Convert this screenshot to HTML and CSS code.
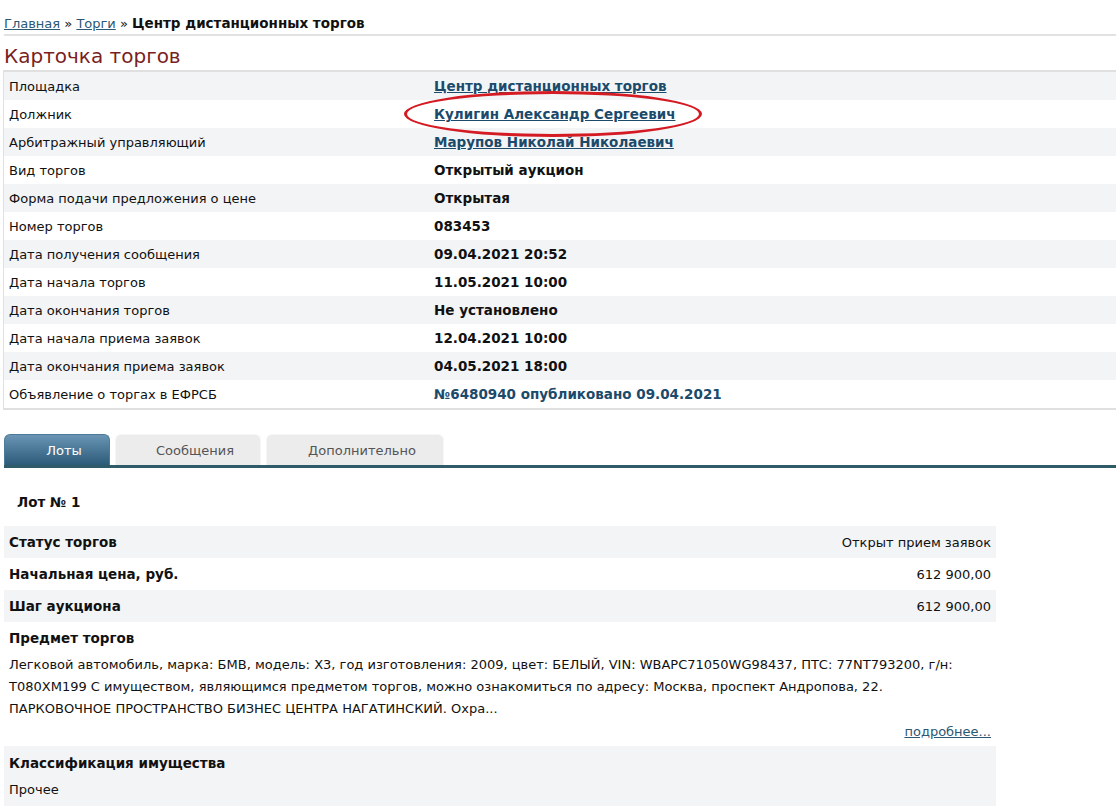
FILE: index.html
```html
<!DOCTYPE html>
<html lang="ru">
<head>
<meta charset="utf-8">
<title>Карточка торгов</title>
<link rel="stylesheet" href="styles.css">
</head>
<body>
<div class="page">
  <div class="crumbs">
    <a href="#">Главная</a> » <a href="#">Торги</a> » <b>Центр дистанционных торгов</b>
  </div>
  <h1 class="title">Карточка торгов</h1>

  <div class="info">
    <div class="row"><div class="k">Площадка</div><div class="v"><a href="#">Центр дистанционных торгов</a></div></div>
    <div class="row"><div class="k">Должник</div><div class="v"><span class="circled"><a href="#">Кулигин Александр Сергеевич</a><span class="ring"></span></span></div></div>
    <div class="row"><div class="k">Арбитражный управляющий</div><div class="v"><a href="#">Марупов Николай Николаевич</a></div></div>
    <div class="row"><div class="k">Вид торгов</div><div class="v">Открытый аукцион</div></div>
    <div class="row"><div class="k">Форма подачи предложения о цене</div><div class="v">Открытая</div></div>
    <div class="row"><div class="k">Номер торгов</div><div class="v">083453</div></div>
    <div class="row"><div class="k">Дата получения сообщения</div><div class="v">09.04.2021 20:52</div></div>
    <div class="row"><div class="k">Дата начала торгов</div><div class="v">11.05.2021 10:00</div></div>
    <div class="row"><div class="k">Дата окончания торгов</div><div class="v">Не установлено</div></div>
    <div class="row"><div class="k">Дата начала приема заявок</div><div class="v">12.04.2021 10:00</div></div>
    <div class="row"><div class="k">Дата окончания приема заявок</div><div class="v">04.05.2021 18:00</div></div>
    <div class="row"><div class="k">Объявление о торгах в ЕФРСБ</div><div class="v"><span class="plain-link">№6480940 опубликовано 09.04.2021</span></div></div>
  </div>

  <div class="tabs">
    <div class="tab active">Лоты</div>
    <div class="tab t2">Сообщения</div>
    <div class="tab t3">Дополнительно</div>
  </div>

  <div class="lot-title">Лот № 1</div>

  <div class="lot">
    <div class="lrow"><div class="lk">Статус торгов</div><div class="lv">Открыт прием заявок</div></div>
    <div class="lrow"><div class="lk">Начальная цена, руб.</div><div class="lv">612 900,00</div></div>
    <div class="lrow"><div class="lk">Шаг аукциона</div><div class="lv">612 900,00</div></div>
    <div class="block">
      <div class="lk">Предмет торгов</div>
      <p class="desc">Легковой автомобиль, марка: БМВ, модель: Х3, год изготовления: 2009, цвет: БЕЛЫЙ, VIN: WBAPC71050WG98437, ПТС: 77NT793200, г/н: Т080ХМ199 С имуществом, являющимся предметом торгов, можно ознакомиться по адресу: Москва, проспект Андропова, 22.<br>ПАРКОВОЧНОЕ ПРОСТРАНСТВО БИЗНЕС ЦЕНТРА НАГАТИНСКИЙ. Охра...</p>
      <div class="more"><a href="#">подробнее...</a></div>
    </div>
    <div class="block grey">
      <div class="lk">Классификация имущества</div>
      <p class="desc">Прочее</p>
    </div>
  </div>
</div>
</body>
</html>
```

FILE: styles.css
```css
html, body {
  margin: 0;
  padding: 0;
  background: #ffffff;
}
body {
  font-family: "DejaVu Sans", Verdana, sans-serif;
  font-size: 13px;
  color: #111;
}
.page {
  padding: 0 0 0 4px;
}
.crumbs {
  height: 36px;
  padding-top: 13px;
  box-sizing: border-box;
  font-size: 13px;
  line-height: 20px;
  border-bottom: 2px solid #e2e2e2;
}
.crumbs a {
  color: #2b5873;
  text-decoration: underline;
}
.crumbs b {
  color: #111;
  font-size: 13.5px;
}
.title {
  margin: 0;
  height: 34px;
  box-sizing: border-box;
  padding-top: 6px;
  font-size: 20px;
  font-weight: normal;
  line-height: 28px;
  color: #7a1e1e;
}
.info {
  margin-left: -1px;
  border-top: 2px solid #e0e0e0;
  border-left: 1px solid #e0e0e0;
  border-bottom: 2px solid #e0e0e0;
}
.row {
  display: flex;
  height: 28px;
  align-items: center;
}
.row:nth-child(odd) {
  background: #f3f4f6;
}
.k {
  width: 425px;
  padding-left: 5px;
  flex: none;
}
.v {
  font-weight: bold;
  font-size: 13.5px;
}
.v a, .plain-link {
  color: #1b4a6b;
  font-weight: bold;
}
.plain-link {
  text-decoration: none;
}
.circled {
  position: relative;
  display: inline-block;
}
.ring {
  position: absolute;
  left: -30px;
  right: -27px;
  top: -15px;
  bottom: -15px;
  border: 3px solid #d41a22;
  border-radius: 50%;
  pointer-events: none;
}
.tabs {
  display: flex;
  margin-top: 24px;
  height: 31px;
  border-bottom: 3px solid #2f5a68;
  gap: 5px;
}
.tab {
  box-sizing: border-box;
  height: 31px;
  line-height: 31px;
  padding-left: 14px;
  text-align: center;
  font-size: 13px;
  border-radius: 6px 6px 0 0;
  background: #ececec;
  color: #555;
  border: 1px solid #f6f6f6;
  border-bottom: none;
}
.tab.active {
  width: 106px;
  background: linear-gradient(#6a95b4, #2c5a79);
  color: #ffffff;
  border-color: #4c7a98;
}
.tab.t2 {
  width: 146px;
}
.tab.t3 {
  width: 178px;
}
.lot-title {
  font-weight: bold;
  font-size: 13.5px;
  height: 58px;
  line-height: 20px;
  padding: 24px 0 0 13px;
  box-sizing: border-box;
}
.lot {
  width: 992px;
}
.lrow {
  display: flex;
  justify-content: space-between;
  align-items: center;
  height: 32px;
  padding: 0 5px;
}
.lrow:nth-child(odd) {
  background: #f3f4f6;
}
.lk {
  font-weight: bold;
  font-size: 13.5px;
}
.lv {
  font-weight: normal;
}
.block {
  padding: 6px 5px 6px 5px;
  height: 124px;
  box-sizing: border-box;
}
.block .lk {
  line-height: 20px;
}
.desc {
  margin: 6px 0 0 0;
  line-height: 22px;
  font-size: 13px;
}
.block.grey {
  background: #f3f4f6;
  height: 60px;
  padding-top: 7px;
}
.block.grey .desc {
  margin-top: 7px;
  line-height: 20px;
}
.more {
  text-align: right;
  line-height: 20px;
  margin-top: 2px;
}
.more a {
  color: #2b5873;
}
```
